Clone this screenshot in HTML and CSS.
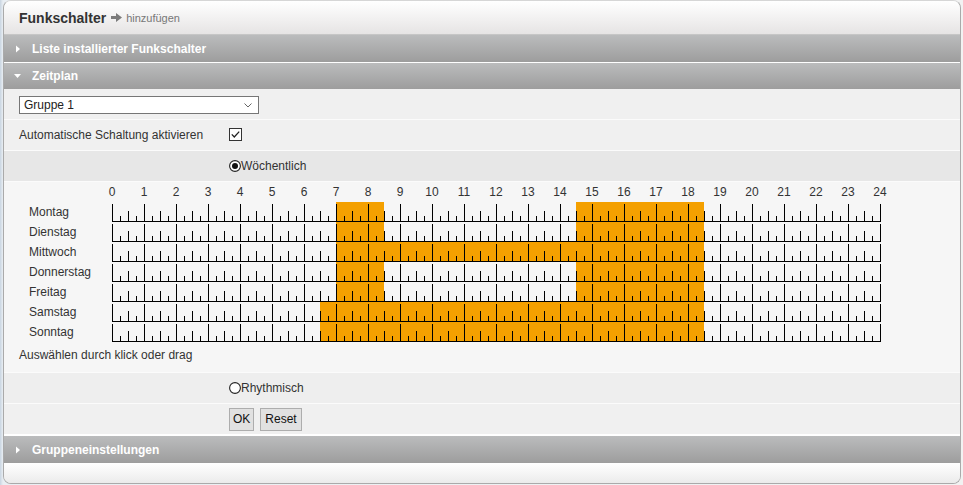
FILE: index.html
```html
<!DOCTYPE html>
<html lang="de">
<head>
<meta charset="utf-8">
<title>Funkschalter</title>
<link rel="stylesheet" href="styles.css">
</head>
<body>
<div class="panel">
  <div class="head">
    <span class="title">Funkschalter</span>
    <svg class="add-icon" width="11" height="9" viewBox="0 0 11 9"><path d="M0 3h5V0l6 4.5-6 4.5V6H0z" fill="#7b7b7b"/></svg>
    <span class="add">hinzufügen</span>
  </div>
  <div class="bar bar-first">
    <svg class="tri" width="8" height="8" viewBox="0 0 8 8"><polygon points="2,0.5 6,4 2,7.5" fill="#fff"/></svg>
    <span>Liste installierter Funkschalter</span>
  </div>
  <div class="bar">
    <svg class="tri" width="8" height="8" viewBox="0 0 8 8"><polygon points="0,2 7,2 3.5,6" fill="#fff"/></svg>
    <span>Zeitplan</span>
  </div>
  <div class="content">
    <div class="row">
      <div class="select">
        <span>Gruppe 1</span>
        <svg width="8" height="5" viewBox="0 0 8 5"><polyline points="0.5,0.5 4,4 7.5,0.5" fill="none" stroke="#666" stroke-width="1"/></svg>
      </div>
    </div>
    <div class="row">
      <span class="lbl">Automatische Schaltung aktivieren</span>
      <svg class="check" width="13" height="13" viewBox="0 0 13 13"><rect x="0.5" y="0.5" width="12" height="12" fill="#fff" stroke="#333"/><polyline points="2.8,6.4 5.3,9 10.2,3.6" fill="none" stroke="#222" stroke-width="1.3"/></svg>
    </div>
    <div class="row row-dark">
      <span class="lbl"></span>
      <svg class="radio" width="12" height="12" viewBox="0 0 12 12"><circle cx="6" cy="6" r="5.4" fill="#fff" stroke="#222" stroke-width="1.1"/><circle cx="6" cy="6" r="3" fill="#111"/></svg>
      <span>Wöchentlich</span>
    </div>
    <div class="schedule">
      <div class="hours">
        <span>0</span><span>1</span><span>2</span><span>3</span><span>4</span><span>5</span><span>6</span><span>7</span><span>8</span><span>9</span><span>10</span><span>11</span><span>12</span><span>13</span><span>14</span><span>15</span><span>16</span><span>17</span><span>18</span><span>19</span><span>20</span><span>21</span><span>22</span><span>23</span><span>24</span>
      </div>
      <div class="day"><span class="dname">Montag</span><div class="track"><i class="seg" style="width:224px"></i><i class="seg on" style="width:48px"></i><i class="seg" style="width:192px"></i><i class="seg on" style="width:128px"></i><i class="seg" style="width:176px"></i></div></div>
      <div class="day"><span class="dname">Dienstag</span><div class="track"><i class="seg" style="width:224px"></i><i class="seg on" style="width:48px"></i><i class="seg" style="width:192px"></i><i class="seg on" style="width:128px"></i><i class="seg" style="width:176px"></i></div></div>
      <div class="day"><span class="dname">Mittwoch</span><div class="track"><i class="seg" style="width:224px"></i><i class="seg on" style="width:368px"></i><i class="seg" style="width:176px"></i></div></div>
      <div class="day"><span class="dname">Donnerstag</span><div class="track"><i class="seg" style="width:224px"></i><i class="seg on" style="width:48px"></i><i class="seg" style="width:192px"></i><i class="seg on" style="width:128px"></i><i class="seg" style="width:176px"></i></div></div>
      <div class="day"><span class="dname">Freitag</span><div class="track"><i class="seg" style="width:224px"></i><i class="seg on" style="width:48px"></i><i class="seg" style="width:192px"></i><i class="seg on" style="width:128px"></i><i class="seg" style="width:176px"></i></div></div>
      <div class="day"><span class="dname">Samstag</span><div class="track"><i class="seg" style="width:208px"></i><i class="seg on" style="width:384px"></i><i class="seg" style="width:176px"></i></div></div>
      <div class="day"><span class="dname">Sonntag</span><div class="track"><i class="seg" style="width:208px"></i><i class="seg on" style="width:384px"></i><i class="seg" style="width:176px"></i></div></div>
      <div class="hint">Auswählen durch klick oder drag</div>
    </div>
    <div class="row row-mid">
      <span class="lbl"></span>
      <svg class="radio" width="12" height="12" viewBox="0 0 12 12"><circle cx="6" cy="6" r="5.4" fill="#fff" stroke="#222" stroke-width="1.1"/></svg>
      <span>Rhythmisch</span>
    </div>
    <div class="row row-buttons">
      <span class="lbl"></span>
      <button class="btn" type="button">OK</button>
      <button class="btn btn-wide" type="button">Reset</button>
    </div>
  </div>
  <div class="bar bar-last">
    <svg class="tri" width="8" height="8" viewBox="0 0 8 8"><polygon points="2,0.5 6,4 2,7.5" fill="#fff"/></svg>
    <span>Gruppeneinstellungen</span>
  </div>
  <div class="foot"></div>
</div>
</body>
</html>
```
FILE: styles.css
```css
html, body {
  margin: 0;
  padding: 0;
}
body {
  width: 963px;
  height: 485px;
  overflow: hidden;
  background: linear-gradient(to right, #c9d5e1 0, #e9eef3 3px, #f2f2f2 100%);
  font-family: "Liberation Sans", Arial, sans-serif;
  font-size: 12px;
  color: #333;
}
.panel {
  margin: 0 2px 0 3px;
  border: 1px solid #aaa;
  border-top-color: #d6d6d6;
  border-radius: 8px;
  overflow: hidden;
  background: #f0f0f0;
}
.head {
  height: 33px;
  border-bottom: 1px solid #c6c6c6;
  background: linear-gradient(#ffffff, #e6e4e4);
  display: flex;
  align-items: center;
  padding-left: 15px;
}
.title {
  font-weight: bold;
  font-size: 14px;
  color: #333;
}
.add-icon {
  margin: 0 4px 0 5px;
}
.add {
  font-size: 11px;
  color: #777;
}
.bar {
  height: 26px;
  border-top: 1px solid #fff;
  background: linear-gradient(#bbbcbd, #9d9d9d);
  display: flex;
  align-items: center;
  color: #fff;
  font-weight: bold;
  font-size: 12px;
}
.bar-first {
  height: 27px;
  border-top: 0;
}
.bar-last {
  height: 27px;
  border-top: 0;
}
.tri {
  margin: 0 10px 0 10px;
}
.content {
  background: #f0f0f0;
}
.row {
  height: 30px;
  border-bottom: 1px solid #fbfbfb;
  display: flex;
  align-items: center;
  padding-left: 15px;
  background: #f0f0f0;
}
.row-dark {
  background: #e7e7e7;
}
.row-mid {
  background: #eeeeee;
}
.row-buttons {
  border-bottom: 2px solid #fff;
}
.lbl {
  width: 210px;
  flex: none;
}
.select {
  width: 234px;
  height: 16px;
  border: 1px solid #767676;
  background: #fff;
  display: flex;
  align-items: center;
  justify-content: space-between;
  padding: 0 0 0 4px;
  box-sizing: content-box;
  color: #222;
  margin-top: 2px;
}
.select svg {
  margin-right: 6px;
}
.check {
  display: block;
  margin-top: -1px;
}
.radio {
  display: block;
}
.schedule {
  height: 190px;
  border-bottom: 1px solid #fbfbfb;
  background: #f6f6f6;
}
.hours {
  height: 20px;
  display: flex;
  margin-left: 92px;
  line-height: 20px;
}
.hours span {
  width: 32px;
  flex: none;
  text-align: center;
}
.day {
  height: 20px;
  display: flex;
  align-items: center;
  padding-left: 25px;
}
.dname {
  width: 83px;
  flex: none;
}
.track {
  position: relative;
  width: 769px;
  height: 20px;
  display: flex;
  flex: none;
}
.seg {
  height: 20px;
  flex: none;
}
.seg.on {
  background: #f4a000;
}
.track::after {
  content: "";
  position: absolute;
  left: 0;
  top: 0;
  right: 0;
  bottom: 0;
  background-image:
    linear-gradient(#000, #000),
    linear-gradient(to right, #000 1px, transparent 1px),
    linear-gradient(to right, #000 1px, transparent 1px),
    linear-gradient(to right, #000 1px, transparent 1px);
  background-size: 100% 1px, 32px 18px, 32px 11px, 16px 6px;
  background-position: 0 100%, 0 100%, 16px 100%, 8px 100%;
  background-repeat: no-repeat, repeat-x, repeat-x, repeat-x;
}
.hint {
  margin-top: 3px;
  height: 20px;
  line-height: 20px;
  padding-left: 15px;
}
.btn {
  height: 23px;
  padding: 0 3px;
  border: 1px solid #adadad;
  background: #e1e1e1;
  font-family: "Liberation Sans", Arial, sans-serif;
  font-size: 12px;
  color: #111;
  margin: 0 6px 0 0;
  border-radius: 0;
}
.btn-wide {
  padding: 0 4px;
}
.foot {
  height: 20px;
  background: linear-gradient(#ffffff, #ebebeb);
}
```
